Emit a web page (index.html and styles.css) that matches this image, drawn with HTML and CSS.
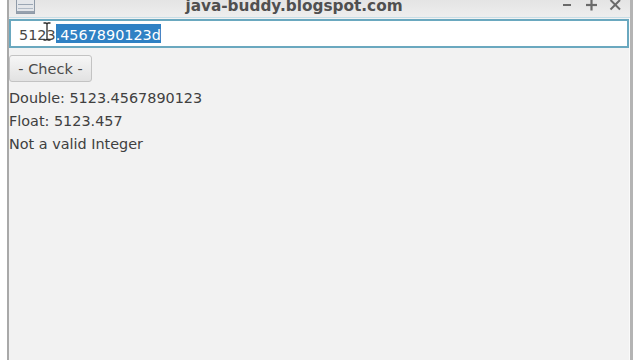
FILE: index.html
```html
<!DOCTYPE html>
<html>
<head>
<meta charset="utf-8">
<link rel="stylesheet" href="styles.css">
</head>
<body>
<div class="window">
  <div class="titlebar">
    <svg class="wicon" width="19" height="14" viewBox="0 0 19 14">
      <rect x="0.5" y="-1" width="18" height="14.5" fill="#e3e6ea" stroke="#8e9aa8"/>
      <line x1="2" y1="4.5" x2="17" y2="4.5" stroke="#9aa6b4"/>
      <line x1="2" y1="8.5" x2="17" y2="8.5" stroke="#b0bac6"/>
      <line x1="1" y1="12" x2="18" y2="12" stroke="#7c8a9a" stroke-width="1.5"/>
    </svg>
    <div class="title">java-buddy.blogspot.com</div>
    <div class="controls">
      <svg width="12" height="12" viewBox="0 0 12 12"><line x1="2" y1="5" x2="10" y2="5" stroke="#6a6a6a" stroke-width="2"/></svg>
      <svg width="12" height="12" viewBox="0 0 12 12"><line x1="1" y1="5" x2="12" y2="5" stroke="#6a6a6a" stroke-width="2.2"/><line x1="6.5" y1="0" x2="6.5" y2="10.5" stroke="#6a6a6a" stroke-width="2.2"/></svg>
      <svg width="12" height="12" viewBox="0 0 12 12"><line x1="1.5" y1="0" x2="11" y2="9.5" stroke="#6a6a6a" stroke-width="2"/><line x1="11" y1="0" x2="1.5" y2="9.5" stroke="#6a6a6a" stroke-width="2"/></svg>
    </div>
  </div>
  <div class="content">
    <div class="field"><span class="plain">5123</span><span class="sel">.4567890123d</span>
      <svg class="ibeam" width="8" height="19" viewBox="0 0 8 19">
        <path d="M0.5 1 H3 L4 2 L5 1 H7.5 M4 2 V17 M0.5 18 H3 L4 17 L5 18 H7.5" fill="none" stroke="#2a2a2a" stroke-width="1.3"/>
      </svg>
    </div>
    <button class="btn">- Check -</button>
    <div class="labels">
      <div class="label">Double: 5123.4567890123</div>
      <div class="label">Float: 5123.457</div>
      <div class="label">Not a valid Integer</div>
    </div>
  </div>
</div>
</body>
</html>
```
FILE: styles.css
```css
html, body {
  margin: 0;
  padding: 0;
  background: #ffffff;
  overflow: hidden;
}
body {
  font-family: "DejaVu Sans", sans-serif;
  width: 640px;
  height: 360px;
}
.window {
  margin-left: 7px;
  width: 626px;
  height: 360px;
  box-sizing: border-box;
  border-left: 2px solid #a9a9a9;
  border-right: 3px solid #b4b4b4;
  background: #f2f2f2;
  display: flex;
  flex-direction: column;
  box-shadow: inset -1px 0 0 #fafafa;
}
.titlebar {
  height: 18px;
  box-sizing: border-box;
  display: flex;
  align-items: flex-start;
  background: linear-gradient(#e4e4e4, #eeeeee);
  border-bottom: 1px solid #c6dde6;
  overflow: hidden;
}
.wicon {
  margin-left: 7px;
  flex: none;
}
.title {
  flex: 1;
  text-align: center;
  font-weight: bold;
  font-size: 15.3px;
  line-height: 16px;
  margin-top: -2px;
  color: #505050;
  padding-left: 2px;
}
.controls {
  display: flex;
  gap: 12px;
  margin-right: 9px;
  padding-left: 10px;
  margin-top: 0px;
}
.controls svg {
  display: block;
}
.content {
  flex: 1;
  display: flex;
  flex-direction: column;
  align-items: flex-start;
  padding-top: 1px;
  padding-right: 1px;
}
.field {
  position: relative;
  align-self: stretch;
  height: 29px;
  box-sizing: border-box;
  border: 2px solid #6aa8bf;
  background: #ffffff;
  padding: 3px 0 0 8px;
  font-size: 14.4px;
  line-height: 22px;
  color: #474747;
  white-space: nowrap;
}
.sel {
  background: #2f81c4;
  color: #ffffff;
  padding-top: 3px;
}
.ibeam {
  position: absolute;
  left: 32px;
  top: 1px;
}
.btn {
  margin-top: 7px;
  width: 83px;
  height: 27px;
  box-sizing: border-box;
  border: 1px solid #c3c3c3;
  border-radius: 3px;
  background: linear-gradient(#f6f6f6, #e2e2e2);
  font-family: "DejaVu Sans", sans-serif;
  font-size: 14.5px;
  color: #4a4a4a;
  padding: 0;
  text-align: center;
}
.labels {
  margin-top: 5px;
  display: flex;
  flex-direction: column;
}
.label {
  font-size: 14.4px;
  line-height: 23px;
  color: #404040;
}
```
